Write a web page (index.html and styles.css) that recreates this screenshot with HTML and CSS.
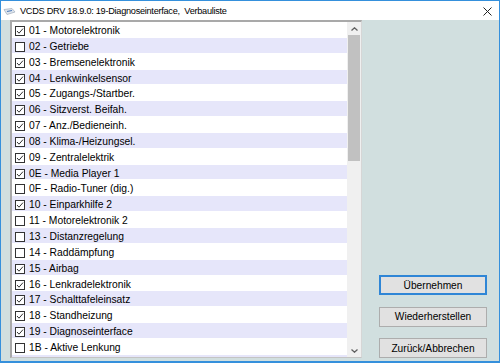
FILE: index.html
```html
<!DOCTYPE html>
<html lang="de">
<head>
    <meta charset="UTF-8">
    <title>VCDS DRV 18.9.0: 19-Diagnoseinterface, Verbauliste</title>
    <link rel="stylesheet" href="styles.css">
</head>
<body>
    <svg width="0" height="0" class="defs">
        <symbol id="box-on" viewBox="0 0 10 10">
            <rect x="0.5" y="0.5" width="9" height="9" fill="#fff" stroke="#333"/>
            <polyline points="2,5 4,7.2 8,2.6" fill="none" stroke="#333" stroke-width="1"/>
        </symbol>
        <symbol id="box-off" viewBox="0 0 10 10">
            <rect x="0.5" y="0.5" width="9" height="9" fill="#fff" stroke="#333"/>
        </symbol>
    </svg>

    <div class="window">
        <div class="titlebar">
            <svg class="app-icon" width="13" height="9" viewBox="0 0 13 9">
                <path d="M1 2.5L9 1.5L12 5L4 7.5Z" fill="#dfe6ee" stroke="#a8b4c2" stroke-width="0.8"/>
                <path d="M4 4.5L9 3.5" stroke="#4a78b8" stroke-width="1.2"/>
            </svg>
            <span class="title">VCDS DRV 18.9.0: 19-Diagnoseinterface,&nbsp; Verbauliste</span>
            <svg class="close" width="9" height="9" viewBox="0 0 9 9">
                <path d="M0.5 0.5L8.5 8.5M8.5 0.5L0.5 8.5" stroke="#222" stroke-width="1"/>
            </svg>
        </div>

        <div class="client">
            <div class="listbox">
                <ul class="items">
                    <li class="item"><svg class="cb"><use href="#box-on"/></svg>01 - Motorelektronik</li>
                    <li class="item"><svg class="cb"><use href="#box-off"/></svg>02 - Getriebe</li>
                    <li class="item"><svg class="cb"><use href="#box-on"/></svg>03 - Bremsenelektronik</li>
                    <li class="item"><svg class="cb"><use href="#box-on"/></svg>04 - Lenkwinkelsensor</li>
                    <li class="item"><svg class="cb"><use href="#box-on"/></svg>05 - Zugangs-/Startber.</li>
                    <li class="item"><svg class="cb"><use href="#box-on"/></svg>06 - Sitzverst. Beifah.</li>
                    <li class="item"><svg class="cb"><use href="#box-on"/></svg>07 - Anz./Bedieneinh.</li>
                    <li class="item"><svg class="cb"><use href="#box-on"/></svg>08 - Klima-/Heizungsel.</li>
                    <li class="item"><svg class="cb"><use href="#box-on"/></svg>09 - Zentralelektrik</li>
                    <li class="item"><svg class="cb"><use href="#box-on"/></svg>0E - Media Player 1</li>
                    <li class="item"><svg class="cb"><use href="#box-off"/></svg>0F - Radio-Tuner (dig.)</li>
                    <li class="item"><svg class="cb"><use href="#box-on"/></svg>10 - Einparkhilfe 2</li>
                    <li class="item"><svg class="cb"><use href="#box-off"/></svg>11 - Motorelektronik 2</li>
                    <li class="item"><svg class="cb"><use href="#box-off"/></svg>13 - Distanzregelung</li>
                    <li class="item"><svg class="cb"><use href="#box-off"/></svg>14 - Raddämpfung</li>
                    <li class="item"><svg class="cb"><use href="#box-on"/></svg>15 - Airbag</li>
                    <li class="item"><svg class="cb"><use href="#box-on"/></svg>16 - Lenkradelektronik</li>
                    <li class="item"><svg class="cb"><use href="#box-on"/></svg>17 - Schalttafeleinsatz</li>
                    <li class="item"><svg class="cb"><use href="#box-on"/></svg>18 - Standheizung</li>
                    <li class="item"><svg class="cb"><use href="#box-on"/></svg>19 - Diagnoseinterface</li>
                    <li class="item"><svg class="cb"><use href="#box-off"/></svg>1B - Aktive Lenkung</li>
                    <li class="item"><svg class="cb"><use href="#box-off"/></svg></li>
                </ul>
                <div class="scrollbar">
                    <div class="arrow">
                        <svg width="7" height="4" viewBox="0 0 7 4"><polyline points="0.5,3.5 3.5,0.8 6.5,3.5" fill="none" stroke="#606060" stroke-width="1.3"/></svg>
                    </div>
                    <div class="track"><div class="thumb"></div></div>
                    <div class="arrow">
                        <svg width="7" height="4" viewBox="0 0 7 4"><polyline points="0.5,0.5 3.5,3.2 6.5,0.5" fill="none" stroke="#606060" stroke-width="1.3"/></svg>
                    </div>
                </div>
            </div>

            <div class="actions">
                <button class="btn btn-default">Übernehmen</button>
                <button class="btn">Wiederherstellen</button>
                <button class="btn">Zurück/Abbrechen</button>
            </div>
        </div>
    </div>
</body>
</html>
```

FILE: styles.css
```css
body {
    margin: 0;
    font-family: "Liberation Sans", Arial, sans-serif;
}
.defs {
    position: absolute;
}
.window {
    width: 500px;
    height: 363px;
    box-sizing: border-box;
    border: 1px solid #3590dc;
    border-bottom-width: 2px;
    background: #d1dfdf;
    display: flex;
    flex-direction: column;
}
.titlebar {
    height: 19px;
    flex: none;
    background: #fff;
    display: flex;
    align-items: center;
    padding: 0 7px 0 2px;
}
.app-icon {
    flex: none;
    margin-top: 1px;
}
.title {
    flex: 1;
    margin-left: 4px;
    font-family: "Liberation Sans", Arial, sans-serif;
    font-size: 9.2px;
    letter-spacing: -0.28px;
    color: #000;
    white-space: nowrap;
}
.close {
    flex: none;
    margin-top: 2px;
}
.client {
    flex: 1;
    display: flex;
    padding-left: 9px;
}
.listbox {
    width: 352px;
    height: 338px;
    box-sizing: border-box;
    border-style: solid;
    border-width: 2px 1px 1px 2px;
    border-color: #a9a9a9 #d6d6d6 #c4c4c4 #a9a9a9;
    background: #fff;
    display: flex;
    overflow: hidden;
}
.items {
    list-style: none;
    margin: 0;
    padding: 0;
    flex: 1;
    overflow: hidden;
}
.item {
    height: 15.85px;
    box-sizing: border-box;
    padding: 3px 0 0 3px;
    display: flex;
    align-items: flex-start;
    font-size: 10.3px;
    line-height: 12.85px;
    color: #000;
    white-space: nowrap;
}
.item:nth-child(even) {
    background: #e6e6fa;
    box-shadow: inset 0 -1px #fff;
}
.cb {
    width: 10px;
    height: 10px;
    flex: none;
    margin: 1px 4px 0 0;
}
.scrollbar {
    width: 14px;
    flex: none;
    background: #f0f0f0;
    display: flex;
    flex-direction: column;
}
.arrow {
    height: 13px;
    display: flex;
    align-items: center;
    justify-content: center;
}
.track {
    flex: 1;
    padding: 0 1px;
}
.thumb {
    height: 126px;
    background: #c1c1c1;
}
.actions {
    flex: 1;
    display: flex;
    flex-direction: column;
    justify-content: flex-end;
    gap: 11.5px;
    padding: 0 12px 3px 17px;
}
.btn {
    height: 20px;
    padding: 0;
    background: #e1e1e1;
    border: 1px solid #adadad;
    font-family: "Liberation Sans", Arial, sans-serif;
    font-size: 10.2px;
    color: #000;
}
.btn-default {
    border: 2px solid #2f86d6;
}
```
